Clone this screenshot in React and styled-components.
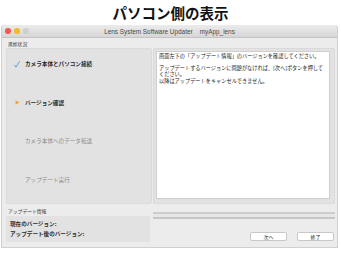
import React from 'react'
import styled, { createGlobalStyle } from 'styled-components'

const Global = createGlobalStyle`
  html, body {
    margin: 0;
    padding: 0;
    background: #ffffff;
  }
  body {
    font-family: "Noto Sans CJK JP", "Liberation Sans", sans-serif;
  }
`

const Page = styled.div`
  width: 341px;
  height: 261px;
  background: #ffffff;
  overflow: hidden;
`

const Heading = styled.h1`
  margin: 0;
  height: 25px;
  line-height: 26px;
  text-align: center;
  font-size: 14.5px;
  font-weight: 700;
  color: #111111;
`

const Window = styled.div`
  margin-left: 1px;
  width: 337px;
  height: 223px;
  background: #ececec;
  border: 1px solid #d0d0d0;
  border-top: none;
  box-sizing: border-box;
  border-radius: 3px 3px 0 0;
  display: flex;
  flex-direction: column;
`

const TitleBar = styled.div`
  position: relative;
  height: 12px;
  flex: none;
  display: flex;
  align-items: center;
  justify-content: center;
  background: linear-gradient(#ebebeb, #d6d6d6);
  border-bottom: 1px solid #c4c4c4;
  border-radius: 3px 3px 0 0;
  font-family: "Liberation Sans", Arial, sans-serif;
  font-size: 6.4px;
  color: #4a4a4a;
  white-space: pre;
`

const Lights = styled.div`
  position: absolute;
  left: 3px;
  top: 3px;
  display: flex;
  gap: 3.5px;
`

const Light = styled.span`
  width: 5.5px;
  height: 5.5px;
  border-radius: 50%;
  background: ${p => p.$color};
`

const Body = styled.div`
  flex: 1;
  padding: 0 2px 0 4px;
  display: grid;
  grid-template-columns: 146px 182px;
  grid-template-rows: 10px 156px 1fr;
  column-gap: 1px;
`

const GroupLabel = styled.div`
  font-size: 4.8px;
  color: #333333;
  display: flex;
  align-items: center;
  padding-left: 2px;
  height: ${p => p.$h || 10}px;
`

const StepPanel = styled.div`
  background: #e2e2e2;
  border: 1px solid #dadada;
  border-radius: 2px;
  box-sizing: border-box;
  padding: 11px 0 0 7px;
  display: flex;
  flex-direction: column;
  gap: 30.5px;
`

const Step = styled.div`
  height: 8px;
  display: flex;
  align-items: center;
  gap: 5px;
  font-size: 5.6px;
  font-weight: ${p => (p.$done || p.$active ? 600 : 400)};
  color: ${p => (p.$done || p.$active ? '#2a2a2a' : '#8a8a8a')};
`

const Mark = styled.span`
  width: 6px;
  height: 8px;
  display: flex;
  align-items: center;
  justify-content: center;
`

const MessagePanel = styled.div`
  background: #e2e2e2;
  border: 1px solid #dadada;
  border-radius: 2px;
  box-sizing: border-box;
  padding: 2px 4px 4px 2px;
  display: flex;
`

const MessageBox = styled.div`
  flex: 1;
  background: #ffffff;
  border: 1px solid #cfcfcf;
  padding: 1px 2px;
  font-size: 5.2px;
  line-height: 6.2px;
  color: #222222;
`

const Para = styled.p`
  margin: 0 0 6px;
`

const InfoColumn = styled.div`
  display: flex;
  flex-direction: column;
  padding-bottom: 5px;
`

const InfoBox = styled.div`
  flex: 1;
  margin: 0 2px 0 0;
  background: #e2e2e2;
  border-radius: 2px;
  padding: 3px 4px;
  display: flex;
  flex-direction: column;
  justify-content: space-around;
  font-size: 5.6px;
  font-weight: 600;
  color: #2a2a2a;
`

const ActionColumn = styled.div`
  display: flex;
  flex-direction: column;
  padding: 8px 0 0;
`

const Progress = styled.div`
  height: 7px;
  box-sizing: border-box;
  border-top: 2px solid #cdcdcd;
  border-bottom: 2px solid #c6c6c6;
  background: #e6e6e6;
`

const Buttons = styled.div`
  display: flex;
  justify-content: flex-end;
  gap: 10px;
  margin-top: 13px;
  padding-right: 1px;
`

const Button = styled.button`
  width: 37px;
  height: 9px;
  padding: 0;
  background: #ffffff;
  border: 1px solid #c8c8c8;
  border-radius: 2px;
  font-family: "Noto Sans CJK JP", sans-serif;
  font-size: 5px;
  line-height: 7px;
  color: #333333;
`

const Check = () => (
  <svg width="6" height="7" viewBox="0 0 6 7">
    <path d="M0.6 4.2 L2 6.2 L5.4 0.6" fill="none" stroke="#4d9fd6" strokeWidth="0.9" strokeLinecap="round" strokeLinejoin="round" />
  </svg>
)

const Arrow = () => (
  <svg width="5" height="5" viewBox="0 0 5 5">
    <path d="M0.5 0.3 L4.6 2.5 L0.5 4.7 Z" fill="#f2a93b" />
  </svg>
)

const steps = [
  { label: 'カメラ本体とパソコン接続', state: 'done' },
  { label: 'バージョン確認', state: 'active' },
  { label: 'カメラ本体へのデータ転送', state: 'todo' },
  { label: 'アップデート実行', state: 'todo' },
]

export default function App() {
  return (
    <Page>
      <Global />
      <Heading>パソコン側の表示</Heading>
      <Window>
        <TitleBar>
          <Lights>
            <Light $color="#f05a52" />
            <Light $color="#f5b82e" />
            <Light $color="#cfcfcf" />
          </Lights>
          {'Lens System Software Updater    myApp_lens'}
        </TitleBar>
        <Body>
          <GroupLabel>進捗状況</GroupLabel>
          <div />
          <StepPanel>
            {steps.map(s => (
              <Step key={s.label} $done={s.state === 'done'} $active={s.state === 'active'}>
                <Mark>
                  {s.state === 'done' && <Check />}
                  {s.state === 'active' && <Arrow />}
                </Mark>
                {s.label}
              </Step>
            ))}
          </StepPanel>
          <MessagePanel>
            <MessageBox>
              <Para>画面左下の「アップデート情報」のバージョンを確認してください。</Para>
              <Para>
                アップデートするバージョンに問題がなければ、[次へ]ボタンを押して
                <br />
                ください。
                <br />
                以降はアップデートをキャンセルできません。
              </Para>
            </MessageBox>
          </MessagePanel>
          <InfoColumn>
            <GroupLabel $h={12}>アップデート情報</GroupLabel>
            <InfoBox>
              <div>現在のバージョン:</div>
              <div>アップデート後のバージョン:</div>
            </InfoBox>
          </InfoColumn>
          <ActionColumn>
            <Progress />
            <Buttons>
              <Button>次へ</Button>
              <Button>終了</Button>
            </Buttons>
          </ActionColumn>
        </Body>
      </Window>
    </Page>
  )
}
